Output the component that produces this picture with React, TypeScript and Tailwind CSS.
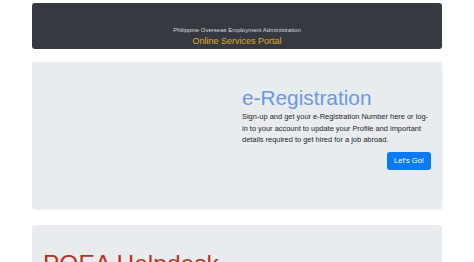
import React from 'react';

const App: React.FC = () => {
  return (
    <div className="h-screen overflow-hidden bg-white font-['Liberation_Sans',Arial,sans-serif]">
      <div className="mx-auto w-[410px] pt-[3px]">
        {/* Header */}
        <div className="h-[46px] rounded-[3px] bg-[#343a40] flex flex-col items-center justify-end pb-[2px]">
          <div className="text-[6px] leading-[10px] text-[#d7d9db]">
            Philippine Overseas Employment Administration
          </div>
          <div className="text-[9px] leading-[12px] text-[#e3a92b]">Online Services Portal</div>
        </div>

        {/* e-Registration */}
        <div className="mt-[13px] h-[147px] rounded-[3px] bg-[#e9ecef] shadow-[1px_1px_2px_rgba(0,0,0,0.06)] grid grid-cols-2">
          <div></div>
          <div className="pl-[5px] pr-[11px] pt-[24px]">
            <h1 className="text-[20.8px] leading-[24px] text-[#6b97e3]">e-Registration</h1>
            <p className="mt-[1px] text-[7.45px] leading-[11.7px] text-[#212529]">
              Sign-up and get your e-Registration Number here or log-in to your account to update your Profile and
              important details required to get hired for a job abroad.
            </p>
            <div className="mt-[6px] flex justify-end">
              <button className="w-[44px] h-[18px] rounded-[3px] bg-[#0a7bf5] text-white text-[7.5px]">
                Let's Go!
              </button>
            </div>
          </div>
        </div>

        {/* Helpdesk */}
        <div className="mt-[16px] h-[80px] rounded-[3px] bg-[#e9ecef] px-[11px] pt-[25px]">
          <h2 className="text-[24.5px] leading-[28px] text-[#b8331a]">POEA Helpdesk</h2>
        </div>
      </div>
    </div>
  );
};

export default App;
